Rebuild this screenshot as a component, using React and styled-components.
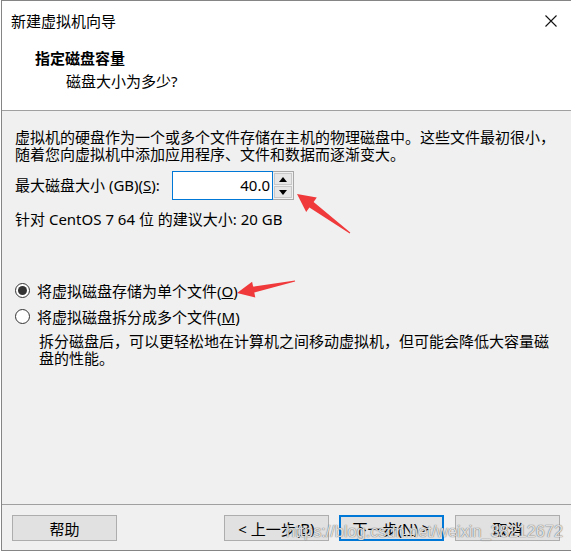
import React from "react";
import styled, { createGlobalStyle } from "styled-components";

const Global = createGlobalStyle`
  html, body { margin: 0; padding: 0; background: #ffffff; overflow: hidden; }
  body { font-family: "Noto Sans", "Noto Sans CJK SC", sans-serif; color: #000; }
  * { box-sizing: border-box; }
`;

const Page = styled.div`
  position: relative;
  width: 571px;
  height: 552px;
  overflow: hidden;
`;

const Window = styled.div`
  margin-left: 1px;
  width: 571px;
  height: 551px;
  border-top: 1px solid #858585;
  border-left: 1px solid #858585;
  border-bottom: 1px solid #858585;
  display: flex;
  flex-direction: column;
  font-size: 15px;
`;

const TitleBar = styled.div`
  height: 40px;
  background: #fff;
  display: flex;
  align-items: center;
  justify-content: space-between;
  padding-left: 9px;
`;

const TitleText = styled.div`
  font-size: 15px;
  line-height: 20px;
`;

const CloseButton = styled.div`
  width: 42px;
  height: 40px;
  display: flex;
  align-items: center;
  justify-content: center;
`;

const Header = styled.div`
  height: 70px;
  background: #fff;
  border-bottom: 1px solid #a0a0a0;
  padding: 7px 0 0 33px;
`;

const HeaderTitle = styled.div`
  font-weight: 700;
  font-size: 15px;
  line-height: 20px;
`;

const HeaderSub = styled.div`
  margin-top: 3px;
  padding-left: 31px;
  font-size: 15px;
  line-height: 20px;
`;

const Body = styled.div`
  flex: 1;
  background: #f0f0f0;
  padding: 18px 0 0 13px;
`;

const Text = styled.div`
  font-size: 15px;
  line-height: 17px;
  white-space: nowrap;
  margin-top: ${(p) => p.$mt || 0}px;
  padding-left: ${(p) => p.$indent || 0}px;
`;

const SizeRow = styled.div`
  margin-top: 8px;
  height: 29px;
  display: flex;
  align-items: center;
`;

const SizeLabel = styled.div`
  width: 157px;
  white-space: nowrap;
  line-height: 17px;
`;

const NumberField = styled.div`
  width: 101px;
  height: 29px;
  border: 1px solid #0078d7;
  background: #fff;
  text-align: right;
  padding-right: 2px;
  line-height: 27px;
`;

const Spinner = styled.div`
  width: 21px;
  height: 29px;
  border: 1px solid #a8a8a8;
  border-left: none;
  background: #f0f0f0;
  display: flex;
  flex-direction: column;
  padding: 1px;
  gap: 1px;
`;

const SpinHalf = styled.div`
  flex: 1;
  background: #e6e6e6;
  border: 1px solid #c8c8c8;
  display: flex;
  align-items: center;
  justify-content: center;
`;

const RadioGroup = styled.div`
  margin-top: 51px;
  display: flex;
  flex-direction: column;
  gap: 4px;
`;

const RadioRow = styled.div`
  height: 22px;
  display: flex;
  align-items: center;
  gap: 7px;
  white-space: nowrap;
`;

const RadioCircle = styled.div`
  width: 15px;
  height: 15px;
  border-radius: 50%;
  border: 1px solid #333;
  background: #fff;
  display: flex;
  align-items: center;
  justify-content: center;
  &::after {
    content: "";
    width: 9px;
    height: 9px;
    border-radius: 50%;
    background: ${(p) => (p.$checked ? "#333" : "transparent")};
  }
`;

const Footer = styled.div`
  height: 46px;
  background: #f0f0f0;
  border-top: 1px solid #a0a0a0;
  display: flex;
  align-items: flex-start;
  padding: 10px 12px 0 10px;
`;

const Spacer = styled.div`
  flex: 1;
`;

const Button = styled.div`
  width: 105px;
  height: 26px;
  margin-left: ${(p) => p.$ml || 0}px;
  border: ${(p) => (p.$primary ? "2px solid #0078d7" : "1px solid #adadad")};
  background: #e1e1e1;
  display: flex;
  align-items: center;
  justify-content: center;
  font-size: 15px;
  white-space: nowrap;
`;

const Watermark = styled.div`
  position: absolute;
  left: 286px;
  top: 521px;
  font-family: "Liberation Sans", Arial, sans-serif;
  font-size: 16.3px;
  line-height: 20px;
  color: rgba(255, 255, 255, 0.8);
  text-shadow: 0 0 1px rgba(90, 90, 90, 0.9), 0 0 1px rgba(90, 90, 90, 0.6);
  white-space: nowrap;
  pointer-events: none;
`;

const Annotation = styled.svg`
  position: absolute;
  left: 0;
  top: 0;
  pointer-events: none;
`;

export default function App() {
  return (
    <Page>
      <Global />
      <Window>
        <TitleBar>
          <TitleText>新建虚拟机向导</TitleText>
          <CloseButton>
            <svg width="12" height="12" viewBox="0 0 12 12">
              <path d="M0.5 0.5 L11.5 11.5 M11.5 0.5 L0.5 11.5" stroke="#111" strokeWidth="1.1" fill="none" />
            </svg>
          </CloseButton>
        </TitleBar>
        <Header>
          <HeaderTitle>指定磁盘容量</HeaderTitle>
          <HeaderSub>磁盘大小为多少?</HeaderSub>
        </Header>
        <Body>
          <Text>
            虚拟机的硬盘作为一个或多个文件存储在主机的物理磁盘中。这些文件最初很小，
            <br />
            随着您向虚拟机中添加应用程序、文件和数据而逐渐变大。
          </Text>
          <SizeRow>
            <SizeLabel>
              最大磁盘大小 (GB)(<u>S</u>):
            </SizeLabel>
            <NumberField>40.0</NumberField>
            <Spinner>
              <SpinHalf>
                <svg width="8" height="5" viewBox="0 0 8 5">
                  <path d="M0 5 L4 0 L8 5 Z" fill="#000" />
                </svg>
              </SpinHalf>
              <SpinHalf>
                <svg width="8" height="5" viewBox="0 0 8 5">
                  <path d="M0 0 L8 0 L4 5 Z" fill="#000" />
                </svg>
              </SpinHalf>
            </Spinner>
          </SizeRow>
          <Text $mt={11}>针对 CentOS 7 64 位 的建议大小: 20 GB</Text>
          <RadioGroup>
            <RadioRow>
              <RadioCircle $checked />
              <span>
                将虚拟磁盘存储为单个文件(<u>O</u>)
              </span>
            </RadioRow>
            <RadioRow>
              <RadioCircle />
              <span>
                将虚拟磁盘拆分成多个文件(<u>M</u>)
              </span>
            </RadioRow>
          </RadioGroup>
          <Text $mt={6} $indent={24}>
            拆分磁盘后，可以更轻松地在计算机之间移动虚拟机，但可能会降低大容量磁
            <br />
            盘的性能。
          </Text>
        </Body>
        <Footer>
          <Button>帮助</Button>
          <Spacer />
          <Button>
            &lt; 上一步(<u>B</u>)
          </Button>
          <Button $primary $ml={10}>
            下一步(<u>N</u>) &gt;
          </Button>
          <Button $ml={11}>取消</Button>
        </Footer>
      </Window>
      <Watermark>https://blog.csdn.net/weixin_38212672</Watermark>
      <Annotation width="571" height="552" viewBox="0 0 571 552">
        <polygon
          points="297,194 316.8,197.5 313.6,201.9 350.3,232.6 349.7,233.4 309.4,207.5 306.2,211.9"
          fill="#f0393b"
        />
        <polygon
          points="237,293 252.1,281.7 253.1,286.6 295,280.6 295.1,281.4 254.3,292.5 255.3,297.4"
          fill="#f0393b"
        />
      </Annotation>
    </Page>
  );
}
